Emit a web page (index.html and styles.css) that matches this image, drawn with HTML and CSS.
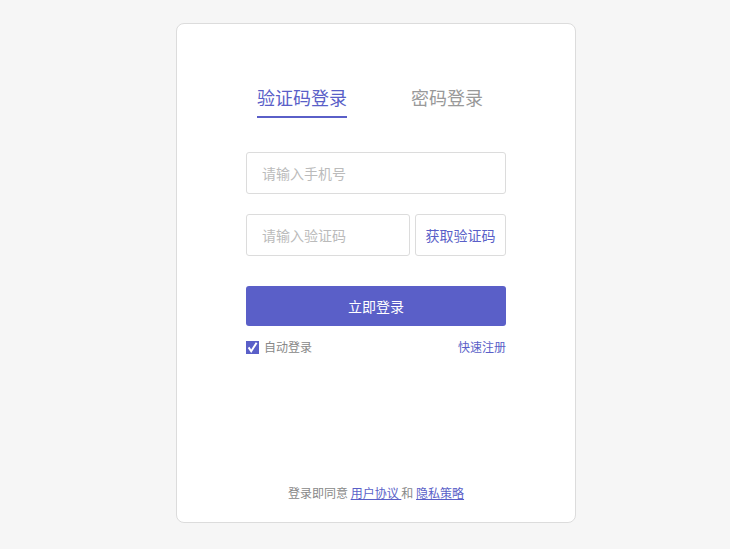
FILE: index.html
```html
<!DOCTYPE html>
<html lang="zh-CN">
<head>
  <meta charset="UTF-8">
  <meta name="viewport" content="width=device-width, initial-scale=1.0">
  <title>登录</title>
  <link rel="stylesheet" href="styles.css">
</head>
<body>
  <div class="login-card">
    <div class="tabs">
      <div class="tab tab-active">验证码登录</div>
      <div class="tab">密码登录</div>
    </div>

    <form class="login-form" onsubmit="return false">
      <input class="field" type="text" placeholder="请输入手机号">
      <div class="code-row">
        <input class="field field-code" type="text" placeholder="请输入验证码">
        <button class="code-btn" type="button">获取验证码</button>
      </div>
      <button class="submit-btn" type="submit">立即登录</button>
      <div class="options">
        <label class="remember">
          <span class="check-box">
            <svg width="13" height="13" viewBox="0 0 13 13"><path d="M2.6 6.4 L5.2 10.2 L10.6 1.8" fill="none" stroke="#fff" stroke-width="2"/></svg>
          </span>
          自动登录
        </label>
        <a class="register" href="#">快速注册</a>
      </div>
    </form>

    <div class="agreement">
      登录即同意 <a href="#">用户协议 </a>和 <a href="#">隐私策略</a>
    </div>
  </div>
</body>
</html>
```

FILE: styles.css
```css
body {
  margin: 0;
  padding: 23px 0 0 176px;
  background-color: #f6f6f6;
  font-family: "Microsoft YaHei", "Noto Sans CJK SC", sans-serif;
}

.login-card {
  box-sizing: border-box;
  width: 400px;
  height: 500px;
  background: #fff;
  border: 1px solid #dcdcdc;
  border-radius: 8px;
  padding: 0 69px;
  display: flex;
  flex-direction: column;
}

/* вкладки */
.tabs {
  display: flex;
  gap: 64px;
  padding-left: 11px;
  margin-top: 60px;
}

.tab {
  font-size: 18px;
  line-height: 26px;
  color: #999;
  padding-bottom: 6px;
  border-bottom: 2px solid transparent;
}

.tab-active {
  color: #5a5fc8;
  border-bottom-color: #5a5fc8;
}

.login-form {
  margin-top: 34px;
  display: flex;
  flex-direction: column;
}

.field {
  box-sizing: border-box;
  height: 42px;
  width: 260px;
  border: 1px solid #dcdcdc;
  border-radius: 3px;
  padding: 0 15px;
  font-family: inherit;
  font-size: 14px;
  color: #333;
  outline: none;
}

.field::placeholder {
  color: #bbb;
}

.code-row {
  display: flex;
  gap: 5px;
  margin-top: 20px;
}

.field-code {
  width: 164px;
}

.code-btn {
  box-sizing: border-box;
  width: 91px;
  height: 42px;
  border: 1px solid #dcdcdc;
  border-radius: 3px;
  background: #fff;
  color: #5a5fc8;
  font-family: inherit;
  font-size: 14px;
  padding: 0;
  cursor: pointer;
}

.submit-btn {
  margin-top: 30px;
  height: 40px;
  width: 260px;
  border: none;
  border-radius: 3px;
  background: #5a5fc8;
  color: #fff;
  font-family: inherit;
  font-size: 14px;
  cursor: pointer;
}

.options {
  display: flex;
  justify-content: space-between;
  align-items: center;
  margin-top: 13px;
  font-size: 12px;
  line-height: 16px;
}

.remember {
  display: flex;
  align-items: center;
  gap: 5px;
  color: #888;
}

.check-box {
  display: block;
  width: 13px;
  height: 13px;
  background: #5a5fc8;
}

.check-box svg {
  display: block;
}

.register {
  color: #5a5fc8;
  text-decoration: none;
}

.agreement {
  margin-top: auto;
  margin-bottom: 21px;
  text-align: center;
  font-size: 12px;
  line-height: 16px;
  color: #888;
}

.agreement a {
  color: #5a5fc8;
}
```
